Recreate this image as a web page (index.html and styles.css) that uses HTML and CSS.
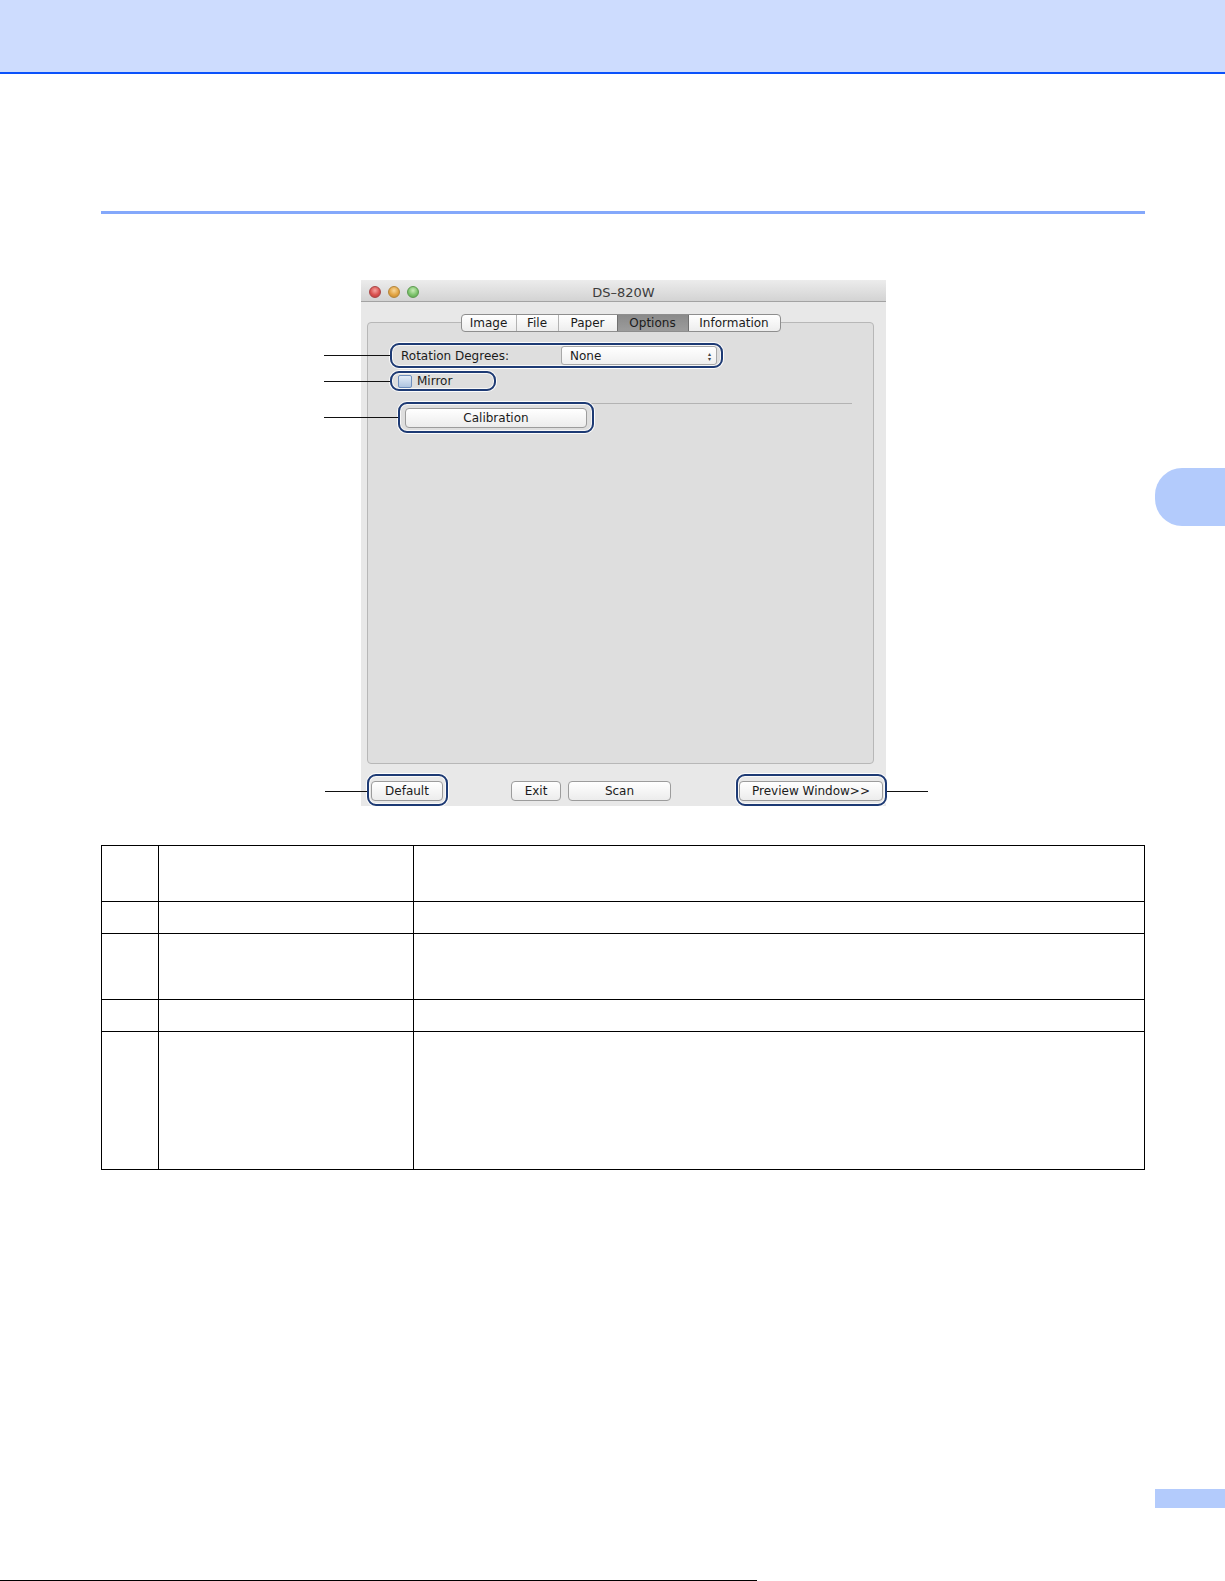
FILE: index.html
```html
<!DOCTYPE html>
<html lang="en">
<head>
<meta charset="utf-8">
<title>DS-820W Options</title>
<link rel="stylesheet" href="styles.css">
</head>
<body>
<header class="band"></header>

<main class="content">
  <div class="rule"></div>

  <div class="figure">
    <div class="window">
      <div class="titlebar">
        <div class="lights">
          <span class="light red"></span>
          <span class="light amber"></span>
          <span class="light green"></span>
        </div>
        <div class="title">DS–820W</div>
        <div></div>
      </div>

      <div class="win-body">
        <div class="panel">
          <div class="tabs">
            <span class="tab t-image">Image</span>
            <span class="tab t-file">File</span>
            <span class="tab t-paper">Paper</span>
            <span class="tab t-options active">Options</span>
            <span class="tab t-info">Information</span>
          </div>

          <div class="row-rotation">
            <span class="label">Rotation Degrees:</span>
            <span class="popup">
              <span class="popup-text">None</span>
              <span class="arrows"><span>▴</span><span>▾</span></span>
            </span>
          </div>

          <label class="row-mirror">
            <span class="checkbox"></span>
            <span class="check-label">Mirror</span>
          </label>

          <div class="separator"></div>

          <button class="btn calib">Calibration</button>
        </div>

        <div class="button-row">
          <button class="btn b-default">Default</button>
          <button class="btn b-exit">Exit</button>
          <button class="btn b-scan">Scan</button>
          <button class="btn b-preview">Preview Window&gt;&gt;</button>
        </div>
      </div>

      <!-- numbered call-outs drawn over the dialog -->
      <span class="callout c-rotation"></span>
      <span class="callout c-mirror"></span>
      <span class="callout c-calib"></span>
      <span class="callout c-default"></span>
      <span class="callout c-preview"></span>

      <span class="leader l-rotation"></span>
      <span class="leader l-mirror"></span>
      <span class="leader l-calib"></span>
      <span class="leader l-default"></span>
      <span class="leader l-preview"></span>
    </div>
  </div>

  <table class="legend">
    <colgroup>
      <col class="col-num">
      <col class="col-name">
      <col class="col-desc">
    </colgroup>
    <tr class="r1"><td></td><td></td><td></td></tr>
    <tr class="r2"><td></td><td></td><td></td></tr>
    <tr class="r3"><td></td><td></td><td></td></tr>
    <tr class="r4"><td></td><td></td><td></td></tr>
    <tr class="r5"><td></td><td></td><td></td></tr>
  </table>
</main>

<div class="chapter-tab"></div>
<div class="page-box"></div>
<div class="footer-line"></div>
</body>
</html>
```

FILE: styles.css
```css
html, body {
  margin: 0;
  padding: 0;
}

body {
  position: relative;
  width: 1225px;
  height: 1581px;
  overflow: hidden;
  background: #ffffff;
  font-family: "DejaVu Sans", "Liberation Sans", sans-serif;
  color: #1b1b1b;
}

/* top chapter band */
.band {
  height: 72px;
  background: #cddcfe;
  border-bottom: 2px solid #0a52fb;
}

.content {
  width: 1044px;
  margin-left: 101px;
}

.rule {
  margin-top: 137px;
  height: 3px;
  background: #84a8fb;
}

/* ---------- dialog ---------- */
.figure {
  padding-top: 66px;
}

.window {
  position: relative;
  width: 525px;
  margin-left: 260px;
  background: #e8e8e8;
  font-size: 12px;
}

.titlebar {
  height: 21px;
  border-bottom: 1px solid #a3a3a3;
  background: linear-gradient(#ececec, #d3d3d3);
  display: grid;
  grid-template-columns: 1fr auto 1fr;
  align-items: center;
}

.lights {
  display: flex;
  gap: 7px;
  padding-left: 8px;
  padding-top: 2px;
}

.light {
  width: 12px;
  height: 12px;
  border-radius: 50%;
  box-sizing: border-box;
}

.red {
  background: radial-gradient(circle at 50% 35%, #f5a3a0 0, #d9514f 55%, #b83a3a 100%);
  border: 1px solid #a94545;
}

.amber {
  background: radial-gradient(circle at 50% 35%, #f8d79a 0, #e2a443 55%, #c0842b 100%);
  border: 1px solid #b4853a;
}

.green {
  background: radial-gradient(circle at 50% 35%, #c8ecb8 0, #7dc36c 55%, #58a24b 100%);
  border: 1px solid #5d9a50;
}

.title {
  font-size: 13px;
  color: #3c3c3c;
  padding-top: 3px;
}

.win-body {
  padding: 20px 0 5px 6px;
}

.panel {
  width: 505px;
  height: 440px;
  border: 1px solid #b7b7b7;
  border-radius: 4px;
  background: #dedede;
  display: flex;
  flex-direction: column;
  align-items: flex-start;
}

.tabs {
  align-self: center;
  margin-top: -9px;
  height: 18px;
  display: flex;
  border: 1px solid #8e8e8e;
  border-radius: 4px;
  box-sizing: border-box;
  overflow: hidden;
  background: linear-gradient(#ffffff, #ededed);
}

.tab {
  display: flex;
  align-items: center;
  justify-content: center;
  font-size: 12px;
  color: #1b1b1b;
  border-left: 1px solid #b3b3b3;
}

.tab:first-child {
  border-left: 0;
}

.t-image { width: 54px; }
.t-file { width: 41px; }
.t-paper { width: 58px; }
.t-options { width: 70px; }
.t-info { width: 91px; }

.tab.active {
  background: linear-gradient(#8a8a8a, #9c9c9c);
  border-left-color: #707070;
}

.t-info {
  border-left-color: #707070;
}

.row-rotation {
  margin-top: 14px;
  margin-left: 33px;
  height: 19px;
  display: flex;
  align-items: center;
}

.label {
  width: 160px;
  font-size: 12px;
  padding-top: 1px;
}

.popup {
  width: 156px;
  height: 19px;
  box-sizing: border-box;
  border: 1px solid #a8a8a8;
  border-radius: 3px;
  background: linear-gradient(#ffffff, #efefef);
  display: flex;
  align-items: center;
  justify-content: space-between;
  padding: 1px 5px 0 8px;
}

.arrows {
  display: flex;
  flex-direction: column;
  font-size: 6px;
  line-height: 5px;
  color: #444;
}

.row-mirror {
  margin-top: 9px;
  margin-left: 30px;
  height: 14px;
  display: flex;
  align-items: center;
  gap: 5px;
}

.checkbox {
  width: 14px;
  height: 13px;
  box-sizing: border-box;
  border: 1px solid #6f8fbd;
  border-radius: 2px;
  background: linear-gradient(#e4edf8, #aec4e0);
}

.separator {
  margin-top: 15px;
  margin-left: 33px;
  width: 451px;
  height: 1px;
  background: #b3b3b3;
}

.btn {
  font-family: "DejaVu Sans", "Liberation Sans", sans-serif;
  font-size: 12px;
  color: #1b1b1b;
  height: 20px;
  padding: 0;
  box-sizing: border-box;
  border: 1px solid #9c9c9c;
  border-radius: 4px;
  background: linear-gradient(#ffffff, #ececec);
}

.calib {
  margin-top: 4px;
  margin-left: 37px;
  width: 182px;
}

.button-row {
  margin-top: 17px;
  display: flex;
  padding-left: 4px;
  padding-right: 3px;
}

.b-default { width: 72px; }
.b-exit { width: 50px; margin-left: 68px; }
.b-scan { width: 103px; margin-left: 7px; }
.b-preview { width: 144px; margin-left: auto; }

/* call-outs */
.callout {
  position: absolute;
  box-sizing: border-box;
  border: 2px solid #1d3a74;
  border-radius: 9px;
  box-shadow: 0 0 0 1px rgba(255, 255, 255, 0.9), inset 0 0 0 1px rgba(255, 255, 255, 0.75);
}

.c-rotation { left: 29px; top: 63px; width: 333px; height: 25px; }
.c-mirror { left: 29px; top: 91px; width: 106px; height: 20px; }
.c-calib { left: 37px; top: 122px; width: 196px; height: 31px; }
.c-default { left: 6px; top: 494px; width: 81px; height: 32px; }
.c-preview { left: 375px; top: 494px; width: 151px; height: 32px; }

.leader {
  position: absolute;
  height: 1px;
  background: #111;
}

.l-rotation { left: -37px; top: 75px; width: 66px; }
.l-mirror { left: -37px; top: 101px; width: 66px; }
.l-calib { left: -37px; top: 137px; width: 74px; }
.l-default { left: -36px; top: 511px; width: 42px; }
.l-preview { left: 526px; top: 511px; width: 41px; }

/* ---------- legend table ---------- */
.legend {
  margin-top: 39px;
  width: 1044px;
  border-collapse: collapse;
  table-layout: fixed;
}

.legend td {
  border: 1px solid #000;
  padding: 0;
}

.col-num { width: 57px; }
.col-name { width: 255px; }

.r1 { height: 56px; }
.r2 { height: 32px; }
.r3 { height: 66px; }
.r4 { height: 32px; }
.r5 { height: 138px; }

/* ---------- page furniture ---------- */
.chapter-tab {
  position: absolute;
  left: 1155px;
  top: 468px;
  width: 70px;
  height: 58px;
  border-radius: 27px 0 0 27px;
  background: #b3cbfc;
}

.page-box {
  position: absolute;
  left: 1155px;
  top: 1489px;
  width: 70px;
  height: 19px;
  background: #b3cbfc;
}

.footer-line {
  position: absolute;
  left: 0;
  top: 1580px;
  width: 757px;
  height: 1px;
  background: #000;
}
```
